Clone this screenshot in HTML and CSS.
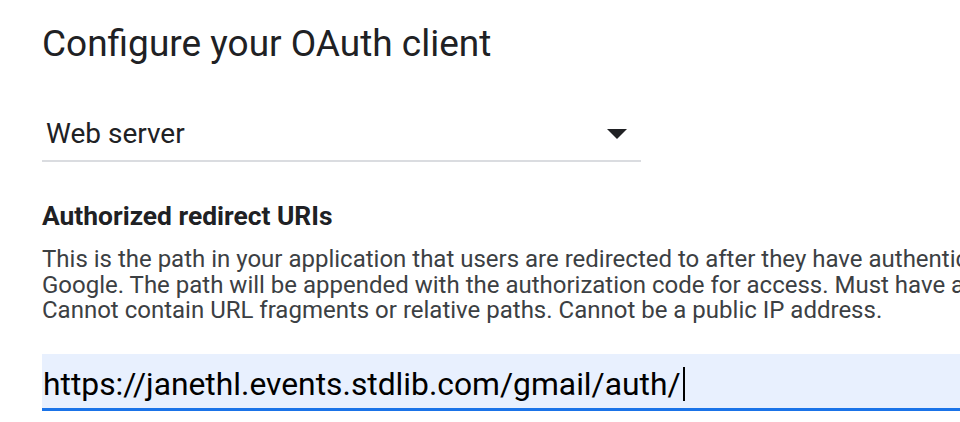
FILE: index.html
```html
<!DOCTYPE html>
<html>
<head>
<meta charset="utf-8">
<link rel="stylesheet" href="styles.css">
</head>
<body>
<div class="page">
  <h1 class="title">Configure your OAuth client</h1>
  <div class="select">
    <span class="select-value">Web server</span>
    <span class="select-arrow"></span>
  </div>
  <h2 class="label">Authorized redirect URIs</h2>
  <p class="help">This is the path in your application that users are redirected to after they have authenticated with<br>Google. The path will be appended with the authorization code for access. Must have a protocol.<br>Cannot contain URL fragments or relative paths. Cannot be a public IP address.</p>
  <div class="input">
    <span class="input-value">https://janethl.events.stdlib.com/gmail/auth/</span><span class="caret"></span>
  </div>
</div>
</body>
</html>
```
FILE: styles.css
```css
html, body {
  margin: 0;
  padding: 0;
  background: #ffffff;
  overflow: hidden;
  width: 960px;
  height: 422px;
}
.page {
  width: 1200px;
  padding-left: 42px;
  font-family: Roboto, "Liberation Sans", sans-serif;
  color: #202124;
}
.title {
  margin: 0;
  padding-top: 22px;
  font-size: 37px;
  font-weight: 400;
  line-height: 44px;
}
.select {
  margin-top: 53px;
  width: 599px;
  display: flex;
  align-items: center;
  justify-content: space-between;
  border-bottom: 2px solid #dadce0;
  padding-bottom: 11px;
}
.select-value {
  padding-left: 4px;
  font-size: 28px;
  line-height: 30px;
}
.select-arrow {
  width: 0;
  height: 0;
  border-left: 10px solid transparent;
  border-right: 10px solid transparent;
  border-top: 10px solid #202124;
  margin-right: 14px;
}
.label {
  margin: 39px 0 0 0;
  font-size: 26.4px;
  font-weight: 700;
  line-height: 30px;
}
.help {
  margin: 16px 0 0 0;
  white-space: nowrap;
  font-size: 24px;
  line-height: 25.5px;
  color: #3c4043;
}
.input {
  margin-top: 30px;
  height: 48px;
  padding-top: 6px;
  background: #e8f0fe;
  border-bottom: 3px solid #1a73e8;
  display: flex;
  align-items: center;
}
.input-value {
  padding-left: 1px;
  font-size: 31.8px;
  line-height: 36px;
  color: #000;
}
.caret {
  display: inline-block;
  width: 2px;
  height: 34px;
  background: #000;
  margin-left: 2px;
}
```
